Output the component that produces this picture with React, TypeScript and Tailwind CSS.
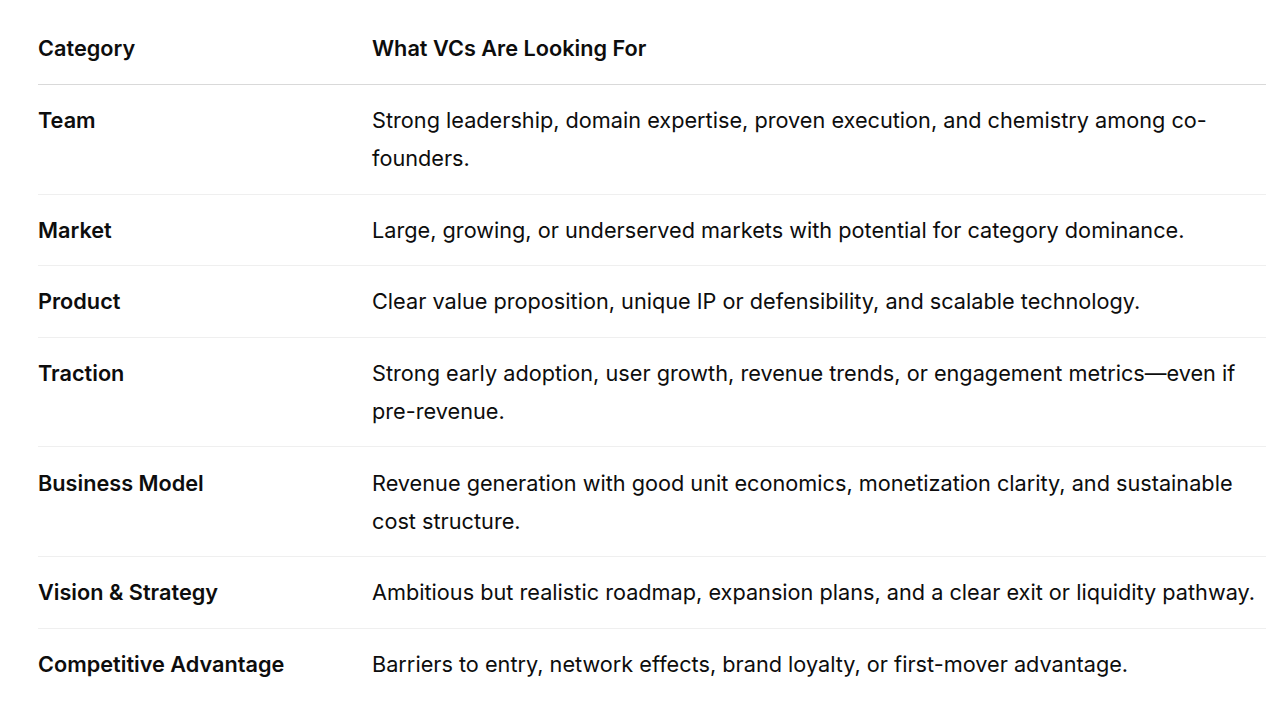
import React from "react";

const rows: [string, string][] = [
  ["Team", "Strong leadership, domain expertise, proven execution, and chemistry among co-founders."],
  ["Market", "Large, growing, or underserved markets with potential for category dominance."],
  ["Product", "Clear value proposition, unique IP or defensibility, and scalable technology."],
  ["Traction", "Strong early adoption, user growth, revenue trends, or engagement metrics\u2014even if pre-revenue."],
  ["Business Model", "Revenue generation with good unit economics, monetization clarity, and sustainable cost structure."],
  ["Vision & Strategy", "Ambitious but realistic roadmap, expansion plans, and a clear exit or liquidity pathway."],
  ["Competitive Advantage", "Barriers to entry, network effects, brand loyalty, or first-mover advantage."],
];

export default function App() {
  return (
    <div className="min-h-[727px] w-full bg-white pt-[12px] pl-[38px] pr-[18px] text-[#0d0d0d] font-['Inter',sans-serif] text-[21.7px] leading-[38px]">
      <table className="w-full border-collapse">
        <thead>
          <tr className="border-b border-[#d9d9d9]">
            <th className="w-[334px] py-[17px] text-left font-semibold align-top">Category</th>
            <th className="py-[17px] text-left font-semibold align-top">What VCs Are Looking For</th>
          </tr>
        </thead>
        <tbody>
          {rows.map(([c, d], i) => (
            <tr key={c} className={i < rows.length - 1 ? "border-b border-[#efefef]" : ""}>
              <td className="py-[16.3px] align-top font-semibold">{c}</td>
              <td className="py-[16.3px] align-top font-normal pr-[4px]">{d}</td>
            </tr>
          ))}
        </tbody>
      </table>
    </div>
  );
}
